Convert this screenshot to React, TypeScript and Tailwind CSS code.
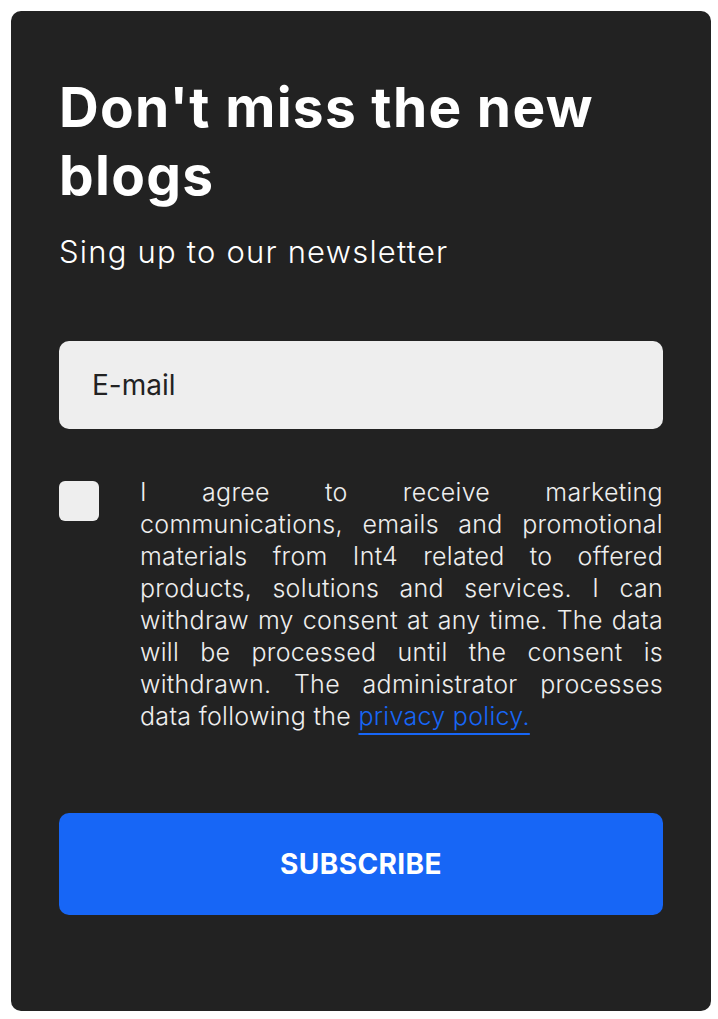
import React from "react";

const lines = [
  "I agree to receive marketing",
  "communications, emails and promotional",
  "materials from Int4 related to offered",
  "products, solutions and services. I can",
  "withdraw my consent at any time. The data",
  "will be processed until the consent is",
  "withdrawn. The administrator processes",
];

export default function App() {
  return (
    <div className="w-[718px] h-[1019px] bg-white p-[11px]" style={{ fontFamily: "Inter, Lato, sans-serif" }}>
      <div className="w-[700px] h-[1000px] bg-[#222222] rounded-[10px] px-12 pt-[62px] flex flex-col">
        <h1 className="text-[55px] leading-[68px] font-bold tracking-[1.3px] text-white">Don't miss the new blogs</h1>
        <p className="mt-[25px] text-[31px] leading-[36px] font-light tracking-[1.2px] text-white">Sing up to our newsletter</p>
        <div className="mt-[71px] h-[88px] rounded-[10px] bg-[#eeeeee] flex items-center pl-[33px]">
          <span className="text-[28px] text-[#222222]">E-mail</span>
        </div>
        <div className="mt-[47px] flex">
          <div className="mt-[5px] w-[40px] h-[40px] rounded-[6px] bg-[#eeeeee] shrink-0" />
          <div className="ml-[41px] flex-1 text-[25px] leading-[32px] font-light tracking-[0.3px] text-[#eeeeee]">
            {lines.map((l) => (
              <div key={l} className="whitespace-nowrap text-justify [text-align-last:justify]">{l}</div>
            ))}
            <div className="whitespace-nowrap">
              data following the{" "}
              <a className="text-[#1766f6] underline decoration-[1.5px] underline-offset-[8px]">privacy policy.</a>
            </div>
          </div>
        </div>
        <button className="mt-[81px] h-[102px] rounded-[10px] bg-[#1766f6] text-white text-[28px] font-bold tracking-[0.4px] uppercase">
          SUBSCRIBE
        </button>
      </div>
    </div>
  );
}
